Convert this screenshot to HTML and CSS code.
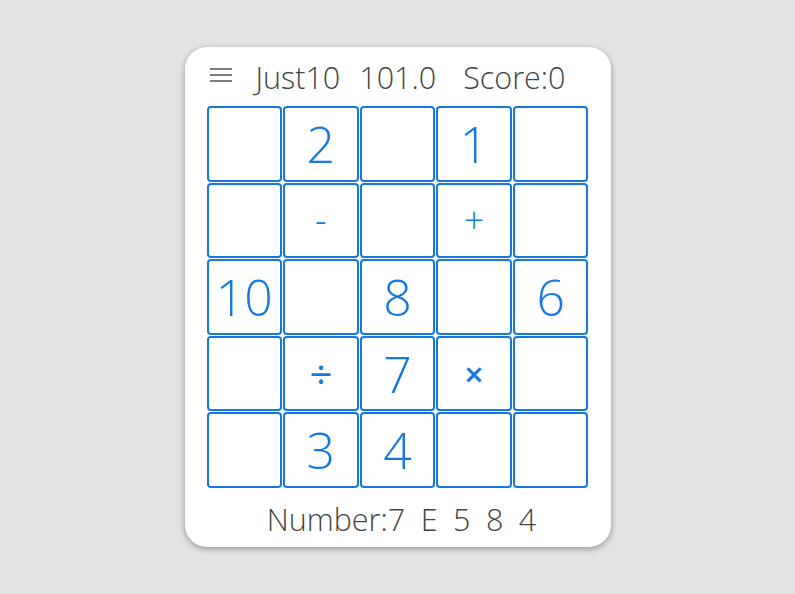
FILE: index.html
```html
<!DOCTYPE html>
<html>
<head>
<meta charset="utf-8">
<link rel="stylesheet" href="styles.css">
</head>
<body>
<div class="card">
  <div class="header">
    <svg class="menu" width="22" height="14" viewBox="0 0 22 14"><path d="M0 1H22M0 7H22M0 13H22" stroke="#555" stroke-width="1.6" fill="none"/></svg>
    <span class="title">Just10</span>
    <span class="title gap1">101.0</span>
    <span class="title gap2">Score:0</span>
  </div>
  <div class="grid">
    <div class="cell"></div><div class="cell">2</div><div class="cell"></div><div class="cell">1</div><div class="cell"></div>
    <div class="cell"></div><div class="cell op">-</div><div class="cell"></div><div class="cell op">+</div><div class="cell"></div>
    <div class="cell">10</div><div class="cell"></div><div class="cell">8</div><div class="cell"></div><div class="cell">6</div>
    <div class="cell"></div><div class="cell op div">÷</div><div class="cell">7</div><div class="cell op bold">×</div><div class="cell"></div>
    <div class="cell"></div><div class="cell">3</div><div class="cell">4</div><div class="cell"></div><div class="cell"></div>
  </div>
  <div class="footer"><span>Number:7</span><span>E</span><span>5</span><span>8</span><span>4</span></div>
</div>
</body>
</html>
```
FILE: styles.css
```css
html, body { margin: 0; padding: 0; }
body {
  background: #e3e3e3;
  width: 795px;
  height: 594px;
  font-family: "Open Sans", "Noto Sans", sans-serif;
  font-weight: 300;
  display: flex;
  justify-content: center;
  padding-top: 47px;
  box-sizing: border-box;
}
.card {
  width: 426px;
  height: 500px;
  background: #fff;
  border-radius: 22px;
  box-shadow: 0 2px 6px rgba(0,0,0,0.35);
  box-sizing: border-box;
  padding: 0 22px 0 22px;
  display: flex;
  flex-direction: column;
}
.header {
  height: 59px;
  display: flex;
  align-items: center;
  color: #444;
  padding-left: 3px;
}
.menu { margin-top: -4px; margin-right: 24px; }
.title { font-size: 30.5px; }
.gap1 { margin-left: 19px; }
.gap2 { margin-left: 27px; }
.grid {
  width: 382px;
  height: 382px;
  display: grid;
  grid-template-columns: repeat(5, 1fr);
  grid-template-rows: repeat(5, 1fr);
  gap: 1px;
}
.cell {
  border: 2px solid #1577e0;
  border-radius: 4px;
  display: flex;
  align-items: center;
  justify-content: center;
  color: #1577e0;
  font-size: 50px;
  line-height: 1;
}
.op { font-size: 36px; }
.div { font-size: 40px; font-weight: 400; }
.bold { font-weight: 600; font-size: 34px; }
.footer {
  display: flex;
  justify-content: center;
  gap: 15.5px;
  font-size: 30.5px;
  color: #444;
  padding-top: 10px;
  padding-left: 8px;
}
```
